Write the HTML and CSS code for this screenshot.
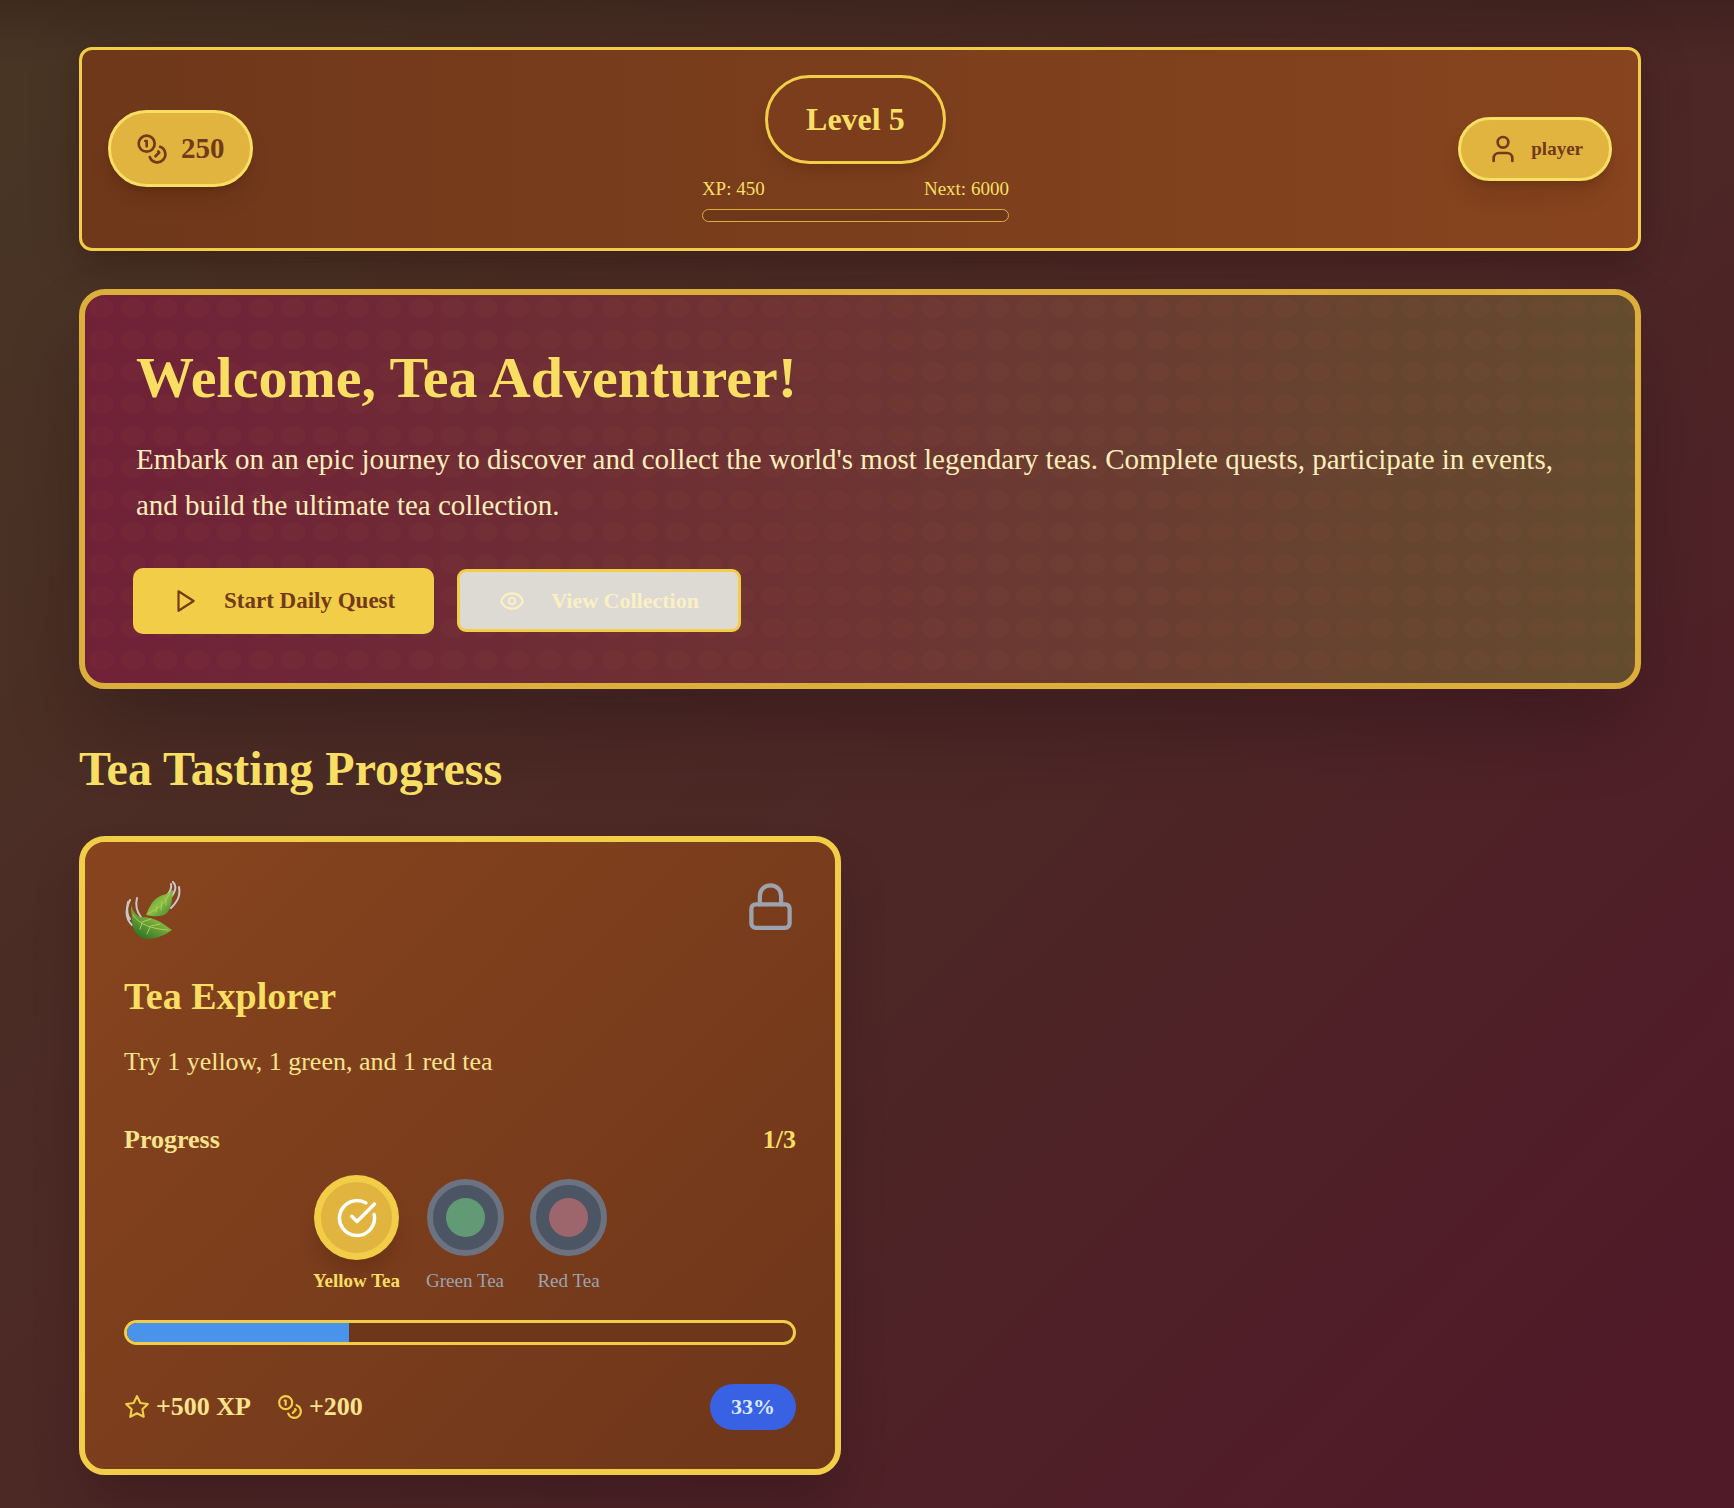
FILE: index.html
```html
<!DOCTYPE html>
<html lang="en">
<head>
<meta charset="utf-8">
<meta name="viewport" content="width=device-width, initial-scale=1">
<title>Tea Adventure</title>
<link rel="stylesheet" href="styles.css">
</head>
<body>
<svg class="sprite" aria-hidden="true">
  <symbol id="coins" viewBox="0 0 24 24"><circle cx="8" cy="8" r="6"/><path d="M18.09 10.37A6 6 0 1 1 10.34 18"/><path d="M7 6h1v4"/><path d="m16.71 13.88.7.71-2.82 2.82"/></symbol>
</svg>
<div class="page">
  <header class="topbar">
    <div class="pill coins-pill">
      <svg class="icon icon-lg"><use href="#coins"/></svg>
      <span>250</span>
    </div>
    <div class="level">
      <div class="level-badge">Level 5</div>
      <div class="xp">
        <div class="xp-labels"><span>XP: 450</span><span>Next: 6000</span></div>
        <div class="xp-track"></div>
      </div>
    </div>
    <button class="pill user-pill" type="button">
      <svg class="icon icon-lg" viewBox="0 0 24 24"><path d="M19 21v-2a4 4 0 0 0-4-4H9a4 4 0 0 0-4 4v2"/><circle cx="12" cy="7" r="4"/></svg>
      <span>player</span>
    </button>
  </header>

  <main>
    <section class="hero">
      <h1>Welcome, Tea Adventurer!</h1>
      <p>Embark on an epic journey to discover and collect the world's most legendary teas. Complete quests, participate in events, and build the ultimate tea collection.</p>
      <div class="actions">
        <button class="btn btn-primary" type="button">
          <svg class="icon icon-md" viewBox="0 0 24 24"><path d="M6 3l14 9-14 9z"/></svg>
          Start Daily Quest
        </button>
        <button class="btn btn-outline" type="button">
          <svg class="icon icon-md" viewBox="0 0 24 24"><path d="M2.062 12.348a1 1 0 0 1 0-.696 10.75 10.75 0 0 1 19.876 0 1 1 0 0 1 0 .696 10.75 10.75 0 0 1-19.876 0"/><circle cx="12" cy="12" r="3"/></svg>
          View Collection
        </button>
      </div>
    </section>

    <section class="progress-section">
      <h2>Tea Tasting Progress</h2>
      <div class="cards">
        <article class="card">
          <div class="card-top">
            <svg class="leaves" viewBox="0 0 58 64" aria-hidden="true">
              <defs>
                <linearGradient id="leafA" x1="0" y1="0" x2="1" y2="1"><stop offset="0" stop-color="#3f8a2c"/><stop offset=".5" stop-color="#8dbd45"/><stop offset="1" stop-color="#3c8430"/></linearGradient>
                <linearGradient id="leafB" x1="1" y1="0" x2=".3" y2="1"><stop offset="0" stop-color="#86b944"/><stop offset=".5" stop-color="#7db03f"/><stop offset="1" stop-color="#2f7527"/></linearGradient>
              </defs>
              <g class="wind">
                <path d="M6 19C1 29 2 38 8 44"/><path d="M4 21C2 30 4 36 6 38"/><path d="M13 17c-2 8 0 14 4 19"/>
                <path d="M49 1c5 5 1 12-3 16"/><path d="M47 3c1 5-1 8-4 11"/><path d="M55 6c2 10-3 16-8 21"/>
              </g>
              <path fill="url(#leafA)" d="M49 9c-1 9-1 17-6 23-4 4-13 4-21 2 3-7 6-14 11-17 5-4 11-3 16-8z"/>
              <path class="vein" d="M45 13c-3 8-10 15-20 19M38 20l-1 9M33 25l-1 6M42 17l0 7"/>
              <path fill="url(#leafB)" d="M7 24c2 6 4 10 10 12 13 0 20 5 31 13-8 6-17 9-26 9-9-1-14-9-14-19 0-5-1-9-1-15z"/>
              <path class="vein" d="M9 34c6 9 18 14 35 15M18 42l-2 6M26 46l-3 7M18 41l9-3M27 45l9-2"/>
            </svg>
            <svg class="icon lock" viewBox="0 0 24 24" role="img" aria-label="Locked"><rect x="3" y="11" width="18" height="11" rx="2"/><path d="M7 11V7a5 5 0 0 1 10 0v4"/></svg>
          </div>
          <h3>Tea Explorer</h3>
          <p class="card-desc">Try 1 yellow, 1 green, and 1 red tea</p>
          <div class="count"><span>Progress</span><span class="count-value">1/3</span></div>
          <ul class="teas">
            <li class="tea tea-done">
              <span class="cup"><svg class="icon check" viewBox="0 0 24 24"><path d="M21.801 10A10 10 0 1 1 17 3.335"/><path d="m9 11 3 3L22 4"/></svg></span>
              <span>Yellow Tea</span>
            </li>
            <li class="tea">
              <span class="cup"><span class="dot dot-green"></span></span>
              <span>Green Tea</span>
            </li>
            <li class="tea">
              <span class="cup"><span class="dot dot-red"></span></span>
              <span>Red Tea</span>
            </li>
          </ul>
          <div class="bar"><div class="bar-fill" style="width: 33.33%"></div></div>
          <div class="card-foot">
            <div class="rewards">
              <span class="reward"><svg class="icon icon-md" viewBox="0 0 24 24"><path d="M12 2l3.09 6.26L22 9.27l-5 4.87 1.18 6.88L12 17.77l-6.18 3.25L7 14.14 2 9.27l6.91-1.01z"/></svg>+500 XP</span>
              <span class="reward"><svg class="icon icon-md"><use href="#coins"/></svg>+200</span>
            </div>
            <span class="percent">33%</span>
          </div>
        </article>
      </div>
    </section>
  </main>
</div>
</body>
</html>
```
FILE: styles.css
```css
:root {
  --gold: #f2cd48;
  --gold-light: #f8df63;
  --gold-dark: #dcae3b;
  --amber: #e1b43f;
  --cream: #f9e38d;
  --brown: #733a1a;
  --brown-light: #87441e;
}

* { box-sizing: border-box; }

body {
  margin: 0;
  min-height: 100vh;
  font-family: "Liberation Serif", "Times New Roman", serif;
  background:
    linear-gradient(rgba(50, 30, 25, 0.5), rgba(50, 30, 25, 0) 64px),
    linear-gradient(135deg, #483724 0%, #4b2c25 30%, #4d2626 58%, #501a28 92%);
}

h1, h2, h3, p, ul { margin: 0; padding: 0; }
button { font: inherit; cursor: pointer; }

.sprite { position: absolute; width: 0; height: 0; }

.page { padding: 47px 93px 34px 79px; }

.icon {
  flex: none;
  fill: none;
  stroke: currentColor;
  stroke-width: 2;
  stroke-linecap: round;
  stroke-linejoin: round;
}
.icon-lg { width: 32px; height: 32px; }
.icon-md { width: 26px; height: 26px; }

.topbar {
  display: flex;
  align-items: center;
  justify-content: space-between;
  padding: 25px 26px 26px;
  border: 3px solid var(--gold);
  border-radius: 13px;
  background: linear-gradient(90deg, #6f381a, var(--brown-light));
  box-shadow: 0 16px 24px -5px rgba(40, 20, 20, 0.3), 0 0 48px rgba(60, 25, 25, 0.25);
}

.pill {
  display: flex;
  align-items: center;
  gap: 12px;
  padding: 0 26px;
  border: 3px solid var(--gold-light);
  border-radius: 39px;
  background: var(--amber);
  color: var(--brown);
  font-weight: bold;
  box-shadow: 0 16px 24px -5px rgba(50, 20, 0, 0.16), 0 6px 10px -6px rgba(50, 20, 0, 0.35);
}
.coins-pill { height: 77px; padding: 0 25px; gap: 13px; font-size: 29px; }
.user-pill { height: 64px; font-size: 19px; }

.level { display: flex; flex-direction: column; align-items: center; gap: 10px; }
.level-badge {
  padding: 16px 38px;
  border: 3px solid var(--gold);
  border-radius: 45px;
  color: var(--gold-light);
  font-size: 32px;
  font-weight: bold;
  line-height: 51px;
  box-shadow: 0 10px 16px -6px rgba(50, 20, 0, 0.25);
  background: #7b3d1b;
}
.xp { width: 307px; }
.xp-labels {
  display: flex;
  justify-content: space-between;
  margin-bottom: 6px;
  color: var(--gold-light);
  font-size: 19px;
  line-height: 29px;
}
.xp-track { height: 13px; border: 1px solid var(--gold-dark); border-radius: 7px; background: #6e371a; }

.hero {
  margin-top: 38px;
  padding: 51px;
  border: 6px solid var(--gold-dark);
  border-radius: 26px;
  background:
    radial-gradient(ellipse 13px 10px at 16px 13px, rgba(150, 80, 55, 0.09) 95%, transparent) padding-box 0 0 / 32px 32px,
    linear-gradient(90deg, #702138, #6d3433 50%, #634c2e) padding-box;
  box-shadow: 0 40px 80px -16px rgba(30, 12, 16, 0.42);
}
.hero h1 { color: var(--gold-light); font-size: 58px; line-height: 64px; }
.hero p { margin: 26px 0 41px; color: #fbeebb; font-size: 29px; line-height: 46px; }

.actions { display: flex; align-items: center; gap: 26px; }
.btn {
  display: flex;
  align-items: center;
  gap: 26px;
  font-weight: bold;
}
.btn-primary {
  height: 60px;
  padding: 0 36px;
  border: 0;
  border-radius: 7px;
  background: var(--gold);
  color: var(--brown);
  font-size: 23px;
  box-shadow: 0 0 0 3px var(--gold);
}
.btn-outline {
  height: 63px;
  padding: 0 39px;
  border: 3px solid var(--gold);
  border-radius: 9px;
  background: #dddad4;
  color: #fbf0c4;
  font-size: 22px;
}

.progress-section { margin-top: 51px; }
.progress-section h2 { margin-bottom: 38px; color: var(--gold-light); font-size: 48px; line-height: 58px; }

.cards { display: grid; grid-template-columns: 1fr 1fr; gap: 38px; }
.card {
  padding: 39px;
  border: 6px solid var(--gold);
  border-radius: 26px;
  background: linear-gradient(135deg, var(--brown-light), #6e361a) padding-box;
  box-shadow: 0 32px 48px -8px rgba(40, 15, 20, 0.36);
}
.card-top { display: flex; justify-content: space-between; align-items: flex-start; }
.leaves { width: 58px; height: 64px; }
.wind { fill: none; stroke: #c9c8c6; stroke-width: 2; stroke-linecap: round; }
.vein { fill: none; stroke: #aed054; stroke-width: 1; stroke-linecap: round; }
.lock { width: 51px; height: 51px; color: #9ca3af; }

.card h3 { margin: 26px 0 19px; color: var(--gold-light); font-size: 38px; line-height: 51px; }
.card-desc { color: var(--cream); font-size: 26px; line-height: 42px; }

.count {
  display: flex;
  justify-content: space-between;
  margin: 38px 0 20px;
  color: var(--cream);
  font-size: 26px;
  font-weight: bold;
  line-height: 38px;
}
.count-value { color: var(--gold-light); }

.teas { display: flex; justify-content: center; gap: 26px; list-style: none; }
.tea {
  display: flex;
  flex-direction: column;
  align-items: center;
  gap: 12px;
  color: #9ca3af;
  font-size: 19px;
  line-height: 26px;
}
.cup {
  display: flex;
  align-items: center;
  justify-content: center;
  width: 77px;
  height: 77px;
  border: 6px solid #6c7280;
  border-radius: 50%;
  background: #4c5563;
}
.tea-done { color: var(--gold-light); font-weight: bold; }
.tea-done .cup {
  border: 3px solid var(--gold);
  background: var(--amber);
  color: #fff;
  box-shadow: 0 0 0 4px var(--gold), 0 16px 20px -2px rgba(50, 20, 0, 0.25);
}
.check { width: 42px; height: 42px; }
.dot { width: 39px; height: 39px; border-radius: 50%; }
.dot-green { background: #629a75; }
.dot-red { background: #9c666c; }

.bar {
  height: 25px;
  margin: 26px 0 39px;
  overflow: hidden;
  border: 3px solid var(--gold);
  border-radius: 13px;
  background: #6e371a;
}
.bar-fill { height: 100%; background: #4a93eb; }

.card-foot { display: flex; align-items: center; justify-content: space-between; }
.rewards { display: flex; gap: 26px; color: var(--cream); font-size: 26px; font-weight: bold; }
.reward { display: flex; align-items: center; gap: 6px; }
.reward .icon { color: var(--gold); }
.percent {
  padding: 0 21px;
  border-radius: 23px;
  background: #3862e3;
  color: #dbe8fd;
  font-size: 22px;
  font-weight: bold;
  line-height: 46px;
}
```
